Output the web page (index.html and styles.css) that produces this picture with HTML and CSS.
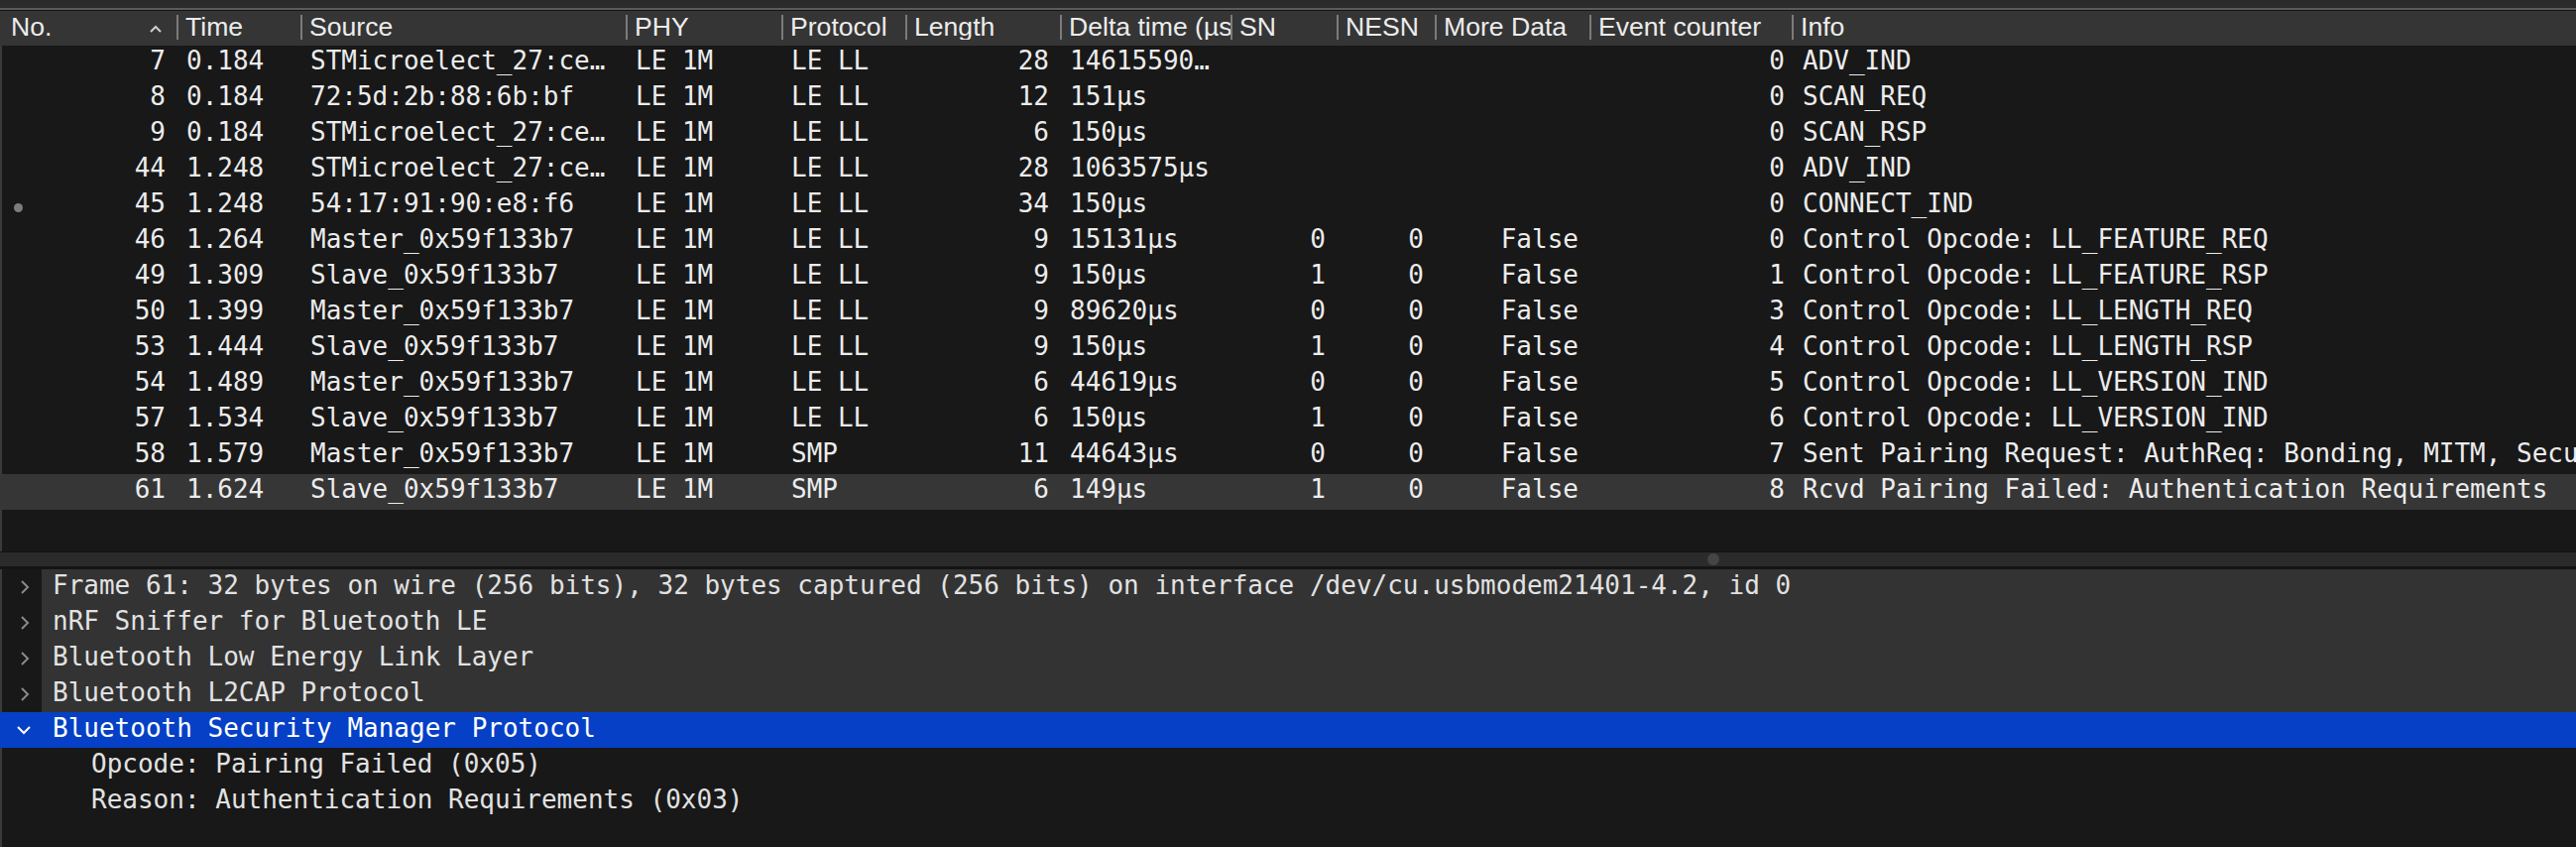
FILE: index.html
```html
<!DOCTYPE html>
<html>
<head>
<meta charset="utf-8">
<title>Wireshark</title>
<link rel="stylesheet" href="styles.css">
</head>
<body>
<div class="app">
  <div class="topbar"></div>
  <div class="header cols">
    <div class="hcell first"><span>No.</span><svg class="caret" width="12" height="8" viewBox="0 0 12 8"><path d="M1 7 L6 2 L11 7" fill="none" stroke="#cfcfcf" stroke-width="2"/></svg></div>
    <div class="hcell">Time</div>
    <div class="hcell">Source</div>
    <div class="hcell">PHY</div>
    <div class="hcell">Protocol</div>
    <div class="hcell">Length</div>
    <div class="hcell">Delta time (µs)</div>
    <div class="hcell">SN</div>
    <div class="hcell">NESN</div>
    <div class="hcell">More Data</div>
    <div class="hcell">Event counter</div>
    <div class="hcell">Info</div>
  </div>
  <div class="list">
    <div class="row cols"><div class="c no">7</div><div class="c">0.184</div><div class="c">STMicroelect_27:ce:7b:5f</div><div class="c">LE 1M</div><div class="c">LE LL</div><div class="c r">28</div><div class="c">1461559052µs</div><div class="c r"></div><div class="c r"></div><div class="c r"></div><div class="c r ev">0</div><div class="c info">ADV_IND</div></div>
    <div class="row cols"><div class="c no">8</div><div class="c">0.184</div><div class="c">72:5d:2b:88:6b:bf</div><div class="c">LE 1M</div><div class="c">LE LL</div><div class="c r">12</div><div class="c">151µs</div><div class="c r"></div><div class="c r"></div><div class="c r"></div><div class="c r ev">0</div><div class="c info">SCAN_REQ</div></div>
    <div class="row cols"><div class="c no">9</div><div class="c">0.184</div><div class="c">STMicroelect_27:ce:7b:5f</div><div class="c">LE 1M</div><div class="c">LE LL</div><div class="c r">6</div><div class="c">150µs</div><div class="c r"></div><div class="c r"></div><div class="c r"></div><div class="c r ev">0</div><div class="c info">SCAN_RSP</div></div>
    <div class="row cols"><div class="c no">44</div><div class="c">1.248</div><div class="c">STMicroelect_27:ce:7b:5f</div><div class="c">LE 1M</div><div class="c">LE LL</div><div class="c r">28</div><div class="c">1063575µs</div><div class="c r"></div><div class="c r"></div><div class="c r"></div><div class="c r ev">0</div><div class="c info">ADV_IND</div></div>
    <div class="row cols"><div class="c no"><span class="dot"></span>45</div><div class="c">1.248</div><div class="c">54:17:91:90:e8:f6</div><div class="c">LE 1M</div><div class="c">LE LL</div><div class="c r">34</div><div class="c">150µs</div><div class="c r"></div><div class="c r"></div><div class="c r"></div><div class="c r ev">0</div><div class="c info">CONNECT_IND</div></div>
    <div class="row cols"><div class="c no">46</div><div class="c">1.264</div><div class="c">Master_0x59f133b7</div><div class="c">LE 1M</div><div class="c">LE LL</div><div class="c r">9</div><div class="c">15131µs</div><div class="c r">0</div><div class="c r">0</div><div class="c r">False</div><div class="c r ev">0</div><div class="c info">Control Opcode: LL_FEATURE_REQ</div></div>
    <div class="row cols"><div class="c no">49</div><div class="c">1.309</div><div class="c">Slave_0x59f133b7</div><div class="c">LE 1M</div><div class="c">LE LL</div><div class="c r">9</div><div class="c">150µs</div><div class="c r">1</div><div class="c r">0</div><div class="c r">False</div><div class="c r ev">1</div><div class="c info">Control Opcode: LL_FEATURE_RSP</div></div>
    <div class="row cols"><div class="c no">50</div><div class="c">1.399</div><div class="c">Master_0x59f133b7</div><div class="c">LE 1M</div><div class="c">LE LL</div><div class="c r">9</div><div class="c">89620µs</div><div class="c r">0</div><div class="c r">0</div><div class="c r">False</div><div class="c r ev">3</div><div class="c info">Control Opcode: LL_LENGTH_REQ</div></div>
    <div class="row cols"><div class="c no">53</div><div class="c">1.444</div><div class="c">Slave_0x59f133b7</div><div class="c">LE 1M</div><div class="c">LE LL</div><div class="c r">9</div><div class="c">150µs</div><div class="c r">1</div><div class="c r">0</div><div class="c r">False</div><div class="c r ev">4</div><div class="c info">Control Opcode: LL_LENGTH_RSP</div></div>
    <div class="row cols"><div class="c no">54</div><div class="c">1.489</div><div class="c">Master_0x59f133b7</div><div class="c">LE 1M</div><div class="c">LE LL</div><div class="c r">6</div><div class="c">44619µs</div><div class="c r">0</div><div class="c r">0</div><div class="c r">False</div><div class="c r ev">5</div><div class="c info">Control Opcode: LL_VERSION_IND</div></div>
    <div class="row cols"><div class="c no">57</div><div class="c">1.534</div><div class="c">Slave_0x59f133b7</div><div class="c">LE 1M</div><div class="c">LE LL</div><div class="c r">6</div><div class="c">150µs</div><div class="c r">1</div><div class="c r">0</div><div class="c r">False</div><div class="c r ev">6</div><div class="c info">Control Opcode: LL_VERSION_IND</div></div>
    <div class="row cols"><div class="c no">58</div><div class="c">1.579</div><div class="c">Master_0x59f133b7</div><div class="c">LE 1M</div><div class="c">SMP</div><div class="c r">11</div><div class="c">44643µs</div><div class="c r">0</div><div class="c r">0</div><div class="c r">False</div><div class="c r ev">7</div><div class="c info">Sent Pairing Request: AuthReq: Bonding, MITM, SecureConnection, CT2, Io Capability: Keyboard Display</div></div>
    <div class="row cols selected"><div class="c no">61</div><div class="c">1.624</div><div class="c">Slave_0x59f133b7</div><div class="c">LE 1M</div><div class="c">SMP</div><div class="c r">6</div><div class="c">149µs</div><div class="c r">1</div><div class="c r">0</div><div class="c r">False</div><div class="c r ev">8</div><div class="c info">Rcvd Pairing Failed: Authentication Requirements</div></div>
  </div>
  <div class="splitter"><span class="handle"></span></div>
  <div class="detail">
    <div class="drow branch"><div class="gutter"><svg width="10" height="16" viewBox="0 0 10 16"><path d="M2 2 L8 8 L2 14" fill="none" stroke="#8a8a8a" stroke-width="2"/></svg></div><div class="dtext">Frame 61: 32 bytes on wire (256 bits), 32 bytes captured (256 bits) on interface /dev/cu.usbmodem21401-4.2, id 0</div></div>
    <div class="drow branch"><div class="gutter"><svg width="10" height="16" viewBox="0 0 10 16"><path d="M2 2 L8 8 L2 14" fill="none" stroke="#8a8a8a" stroke-width="2"/></svg></div><div class="dtext">nRF Sniffer for Bluetooth LE</div></div>
    <div class="drow branch"><div class="gutter"><svg width="10" height="16" viewBox="0 0 10 16"><path d="M2 2 L8 8 L2 14" fill="none" stroke="#8a8a8a" stroke-width="2"/></svg></div><div class="dtext">Bluetooth Low Energy Link Layer</div></div>
    <div class="drow branch"><div class="gutter"><svg width="10" height="16" viewBox="0 0 10 16"><path d="M2 2 L8 8 L2 14" fill="none" stroke="#8a8a8a" stroke-width="2"/></svg></div><div class="dtext">Bluetooth L2CAP Protocol</div></div>
    <div class="drow selected"><div class="gutter open"><svg width="16" height="10" viewBox="0 0 16 10"><path d="M2 2 L8 8 L14 2" fill="none" stroke="#ffffff" stroke-width="2"/></svg></div><div class="dtext">Bluetooth Security Manager Protocol</div></div>
    <div class="drow child"><div class="gutter"></div><div class="dtext">Opcode: Pairing Failed (0x05)</div></div>
    <div class="drow child"><div class="gutter"></div><div class="dtext">Reason: Authentication Requirements (0x03)</div></div>
  </div>
</div>
</body>
</html>
```
FILE: styles.css
```css
html, body {
  margin: 0;
  padding: 0;
}
body {
  width: 2598px;
  height: 854px;
  overflow: hidden;
  background: #181818;
  color: #e6e6e6;
  font-family: "Liberation Sans", Arial, sans-serif;
}
.app {
  display: flex;
  flex-direction: column;
  height: 854px;
}
.topbar {
  flex: none;
  height: 8px;
  background: #2b2b2b;
  border-bottom: 2px solid #5b5b5b;
}
.cols {
  display: grid;
  grid-template-columns: 178px 125px 328px 157px 125px 156px 172px 107px 99px 156px 204px 1fr;
}
.header {
  flex: none;
  box-sizing: border-box;
  height: 36px;
  border-top: 1px solid #151515;
  background: #353535;
}
.hcell {
  margin-top: 4px;
  height: 25px;
  line-height: 25px;
  font-size: 26.6px;
  padding-left: 7px;
  border-left: 2px solid #7b7b7b;
  white-space: nowrap;
  overflow: hidden;
  color: #ececec;
}
.hcell.first {
  border-left: none;
  padding-left: 11px;
  padding-right: 15px;
  display: flex;
  justify-content: space-between;
  align-items: center;
}
.caret {
  margin-top: 3px;
}
.list {
  flex: none;
  height: 510px;
  box-shadow: inset 2px 0 0 #3a3a3a;
  font-family: "DejaVu Sans Mono", "Liberation Mono", monospace;
  font-size: 26px;
}
.row {
  height: 36px;
}
.row.selected {
  background: #363636;
}
.c {
  box-sizing: border-box;
  height: 36px;
  line-height: 30px;
  padding: 0 11px 6px 10px;
  white-space: nowrap;
  overflow: hidden;
  text-overflow: ellipsis;
  color: #ececec;
}
.c.r {
  text-align: right;
}
.c.ev {
  padding-right: 7px;
}
.c.info {
  text-overflow: clip;
  padding-left: 11px;
}
.c.no {
  display: flex;
  justify-content: flex-end;
  padding-left: 14px;
}
.dot {
  width: 9px;
  height: 9px;
  border-radius: 50%;
  background: #7c7c7c;
  margin-top: 15px;
  margin-right: auto;
}
.splitter {
  flex: none;
  height: 14px;
  border-top: 1px solid #121212;
  border-bottom: 3px solid #141414;
  background: #2b2b2b;
  display: flex;
  align-items: center;
  padding-left: 1722px;
}
.handle {
  width: 12px;
  height: 12px;
  border-radius: 50%;
  background: #454545;
}
.detail {
  flex: 1;
  box-shadow: inset 2px 0 0 #3a3a3a;
  font-family: "DejaVu Sans Mono", "Liberation Mono", monospace;
  font-size: 26px;
  color: #e2e2e2;
}
.drow {
  display: flex;
  height: 36px;
}
.gutter {
  flex: none;
  width: 42px;
  box-sizing: border-box;
  padding-left: 20px;
  display: flex;
  align-items: center;
}
.gutter.open {
  padding-left: 16px;
}
.dtext {
  flex: 1;
  box-sizing: border-box;
  height: 36px;
  line-height: 33px;
  padding: 0 0 3px 11px;
  white-space: nowrap;
  overflow: hidden;
}
.drow.branch .dtext {
  background: #333333;
}
.drow.selected {
  background: #0540c6;
  color: #ffffff;
}
.drow.child .dtext {
  padding-left: 50px;
}
```
